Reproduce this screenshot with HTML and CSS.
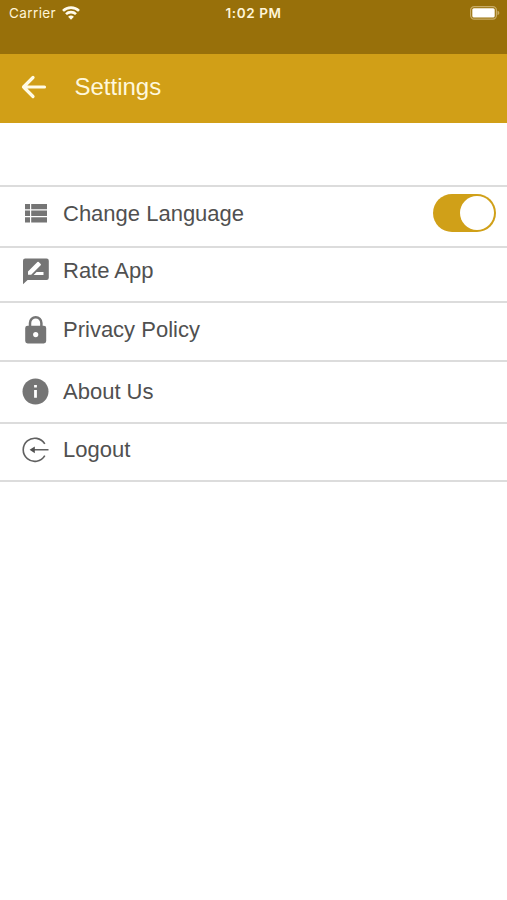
FILE: index.html
```html
<!DOCTYPE html>
<html lang="en">
<head>
	<meta charset="utf-8">
	<title>Settings</title>
	<link rel="stylesheet" href="styles.css">
</head>
<body>
	<div class="status-bar">
		<div class="carrier">
			<span>Carrier</span>
			<svg class="wifi" viewBox="0 0 18 14">
				<path d="M1 4.900 A11.400 11.400 0 0 1 17 4.900" />
				<path d="M4 8.100 A7.200 7.200 0 0 1 14 8.100" />
				<path class="dot" d="M9 13.800 L6.100 10.800 A4.200 4.200 0 0 1 11.900 10.800 Z" />
			</svg>
		</div>
		<div class="time">1:02 PM</div>
		<div class="power">
			<svg class="battery" viewBox="0 0 30 14">
				<rect class="case" x="0.6" y="0.6" width="25.8" height="12.6" rx="3.6" />
				<rect class="level" x="2.3" y="2.2" width="22.4" height="9.4" rx="1.5" />
				<path class="tip" d="M27.5 4.8 Q29.4 5.4 29.4 7 Q29.4 8.6 27.5 9.2 Z" />
			</svg>
		</div>
	</div>

	<header class="header">
		<svg class="back" viewBox="0 0 26 24">
			<path d="M23.5 12 H2.5 M12 2.500 L2.500 12 L12 21.500" />
		</svg>
		<h1>Settings</h1>
	</header>

	<ul class="menu">
		<li class="item language">
			<svg class="icon" viewBox="0 0 28 28">
				<path d="M4 4h5v5.300H4zM10.200 4H26v5.300H10.200zM4 10.600h5v5.300H4zM10.200 10.600H26v5.300H10.200zM4 17.200h5v5.300H4zM10.200 17.200H26v5.300H10.200z" />
			</svg>
			<span>Change Language</span>
			<div class="switch"><div class="knob"></div></div>
		</li>
		<li class="item rate">
			<svg class="icon" viewBox="0 0 28 28">
				<path d="M4.200 1.600h21.400a2.200 2.200 0 0 1 2.200 2.200v17a2.200 2.200 0 0 1-2.200 2.200H6.600L2 27.300V3.800a2.200 2.200 0 0 1 2.200-2.200z" />
				<path class="cut" d="M7 17.800v-3.300l9.400-9.400q.7-.6 1.300 0l2 2q.6.600 0 1.200L10.200 17.800zM22.500 18H12.600l3-3h6.900z" />
			</svg>
			<span>Rate App</span>
		</li>
		<li class="item privacy">
			<svg class="icon" viewBox="0 0 28 28">
				<path class="shackle" d="M9 11V7a5.700 5.700 0 0 1 11.400 0v4" />
				<rect x="4.200" y="9.700" width="21" height="17.800" rx="2.400" />
				<circle class="cut" cx="14.700" cy="18.600" r="2.600" />
			</svg>
			<span>Privacy Policy</span>
		</li>
		<li class="item about">
			<svg class="icon" viewBox="0 0 28 28">
				<circle cx="14.500" cy="13.500" r="13" />
				<path class="cut" d="M13.100 7h2.800v2.600h-2.800zM13.100 12h2.800v7.800h-2.800z" />
			</svg>
			<span>About Us</span>
		</li>
		<li class="item logout">
			<svg class="icon" viewBox="0 0 28 28">
				<path class="line" d="M23.800 7.900A11.600 11.600 0 1 0 23.800 19.700M11 13.800H27.500" />
				<path class="head" d="M8.600 13.800l5.200-3.400v6.800z" />
			</svg>
			<span>Logout</span>
		</li>
	</ul>
</body>
</html>
```
FILE: styles.css
```css
body {
	margin: 0;
	background: #fff;
	color: #505050;
	font-family: "Liberation Sans", Arial, sans-serif;
}

svg {
	display: block;
	flex: none;
}

.status-bar {
	display: grid;
	grid-template-columns: 1fr auto 1fr;
	align-items: start;
	box-sizing: border-box;
	height: 54px;
	padding: 5px 7px 0 9px;
	background: #98700a;
	color: #fff5d8;
	font-family: Inter, sans-serif;
	font-size: 13.5px;
	line-height: 17px;
}

.carrier {
	display: flex;
	gap: 6px;
	letter-spacing: 0.4px;
}

.wifi {
	width: 18px;
	height: 14px;
	margin-top: 1px;
	fill: none;
	stroke: #fffbed;
	stroke-width: 2.6;
}

.wifi .dot {
	fill: #fffbed;
	stroke: none;
}

.time {
	padding-right: 2px;
	font-weight: 600;
	letter-spacing: 0.6px;
}

.power {
	display: flex;
	justify-content: flex-end;
}

.battery {
	width: 30px;
	height: 14px;
	margin-top: 1px;
}

.battery .case {
	fill: none;
	stroke: #c8ac66;
	stroke-width: 1.2;
}

.battery .level {
	fill: #fff;
}

.battery .tip {
	fill: #c8ac66;
}

.header {
	display: flex;
	align-items: center;
	gap: 27.5px;
	box-sizing: border-box;
	height: 69px;
	padding: 0 21px 4px;
	background: #d19f17;
}

.back {
	width: 26px;
	height: 24px;
	fill: none;
	stroke: #fffbe6;
	stroke-width: 3.2;
	stroke-linecap: round;
	stroke-linejoin: round;
}

.header h1 {
	margin: 0;
	color: #fff8dc;
	font-size: 24px;
	font-weight: normal;
}

.menu {
	margin: 62px 0 0;
	padding: 0;
	list-style: none;
	border-top: 2px solid #dcdcdc;
}

.item {
	display: flex;
	align-items: center;
	gap: 14px;
	box-sizing: border-box;
	padding: 0 11px 0 21px;
	border-bottom: 2px solid #dcdcdc;
	font-size: 22px;
}

.language {
	height: 61px;
	padding-bottom: 6px;
}

.rate {
	height: 55px;
	padding-bottom: 7px;
}

.privacy {
	height: 59px;
	padding-bottom: 4px;
}

.about {
	height: 62px;
	padding-bottom: 1px;
}

.logout {
	height: 58px;
	padding-bottom: 4px;
}

.icon {
	width: 28px;
	height: 28px;
	fill: #757575;
}

.icon .cut {
	fill: #fff;
}

.icon .shackle {
	fill: none;
	stroke: #757575;
	stroke-width: 2.5;
}

.icon .line {
	fill: none;
	stroke: #606060;
	stroke-width: 1.6;
}

.icon .head {
	fill: #505050;
}

.switch {
	display: flex;
	justify-content: flex-end;
	box-sizing: border-box;
	width: 63px;
	height: 38px;
	margin: 0 0 2px auto;
	padding: 2px;
	border-radius: 19px;
	background: #d0a018;
}

.knob {
	width: 34px;
	height: 34px;
	border-radius: 50%;
	background: #fff;
}
```
